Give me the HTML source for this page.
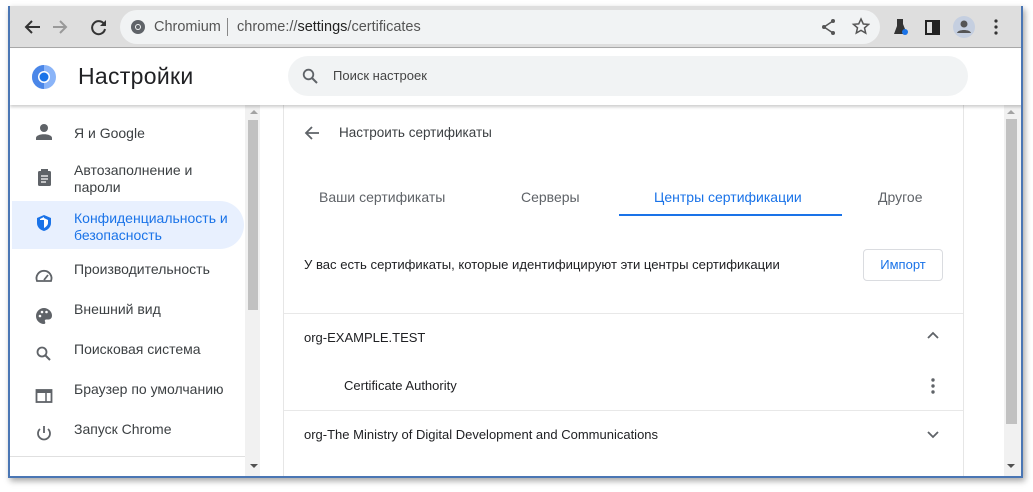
<!DOCTYPE html>
<html><head><meta charset="utf-8"><style>
*{margin:0;padding:0;box-sizing:border-box}
body{width:1033px;height:492px;background:#fff;position:relative;overflow:hidden;font-family:"Liberation Sans","DejaVu Sans",sans-serif}
.a{position:absolute}
.win{left:8px;top:6px;width:1015px;height:472px;border:2px solid #4a76b4;border-top:none;box-shadow:2px 3px 6px rgba(0,0,0,.35);background:#fff;overflow:hidden}
.t{font-size:14px;color:#3c4043;white-space:nowrap}
.nav{font-size:14px;color:#3c4043;white-space:nowrap;line-height:17px}
</style></head><body>
<div class="a win">
  <div class="a" style="left:0;top:0;width:1013px;height:42px;background:#dedede;border-bottom:1px solid #a8a8a8"></div>
  <svg class="a" style="left:12px;top:10px" width="90" height="22" viewBox="0 0 90 22">
    <path d="M18 11H5M10 5l-6 6 6 6" stroke="#333" stroke-width="2" fill="none"/>
    <path d="M44 11H31M38 5l6 6-6 6" stroke="#999" stroke-width="2" fill="none"/>
    <path d="M82 8a6.5 6.5 0 1 0 1 5" stroke="#333" stroke-width="2" fill="none"/><path d="M84 4v6h-6z" fill="#333"/>
  </svg>
  <div class="a" style="left:110px;top:4px;width:760px;height:34px;border-radius:17px;background:#f1f3f4"></div>
  <svg class="a" style="left:120px;top:13px" width="16" height="16" viewBox="0 0 16 16"><circle cx="8" cy="8" r="7" fill="#5f6368"/><circle cx="8" cy="8" r="3" fill="#f1f3f4"/><circle cx="8" cy="8" r="2" fill="#5f6368"/></svg>
  <div class="a t" style="left:144px;top:13px;color:#555;font-size:14.5px">Chromium</div>
  <div class="a" style="left:217px;top:12px;width:1px;height:18px;background:#888"></div>
  <div class="a t" style="left:227px;top:13px;color:#555;font-size:14.5px">chrome://<span style="color:#222">settings</span>/certificates</div>
  <svg class="a" style="left:810px;top:11px" width="50" height="20" viewBox="0 0 50 20"><circle cx="13" cy="4" r="2" fill="#555"/><circle cx="4" cy="10" r="2" fill="#555"/><circle cx="13" cy="16" r="2" fill="#555"/><path d="M13 4L4 10l9 6" stroke="#555" stroke-width="1.5" fill="none"/><path d="M41 2l2.3 5 5.2.4-4 3.5 1.2 5.2L41 13.4 36.3 16l1.2-5.2-4-3.5 5.2-.4z" stroke="#555" stroke-width="1.5" fill="none"/></svg>
  <svg class="a" style="left:882px;top:10px" width="110" height="22" viewBox="0 0 110 22"><path d="M5 3h6v5l4 10H2l3-8z" fill="#333"/><circle cx="13" cy="16" r="3" fill="#1a73e8"/><rect x="34" y="5" width="13" height="13" fill="none" stroke="#222" stroke-width="2"/><rect x="40" y="5" width="7" height="13" fill="#222"/><circle cx="72" cy="11" r="11" fill="#c5cfe0"/><circle cx="72" cy="8" r="3.5" fill="#555"/><path d="M65 17c1-4 13-4 14 0z" fill="#555"/><circle cx="104" cy="5" r="1.6" fill="#333"/><circle cx="104" cy="11" r="1.6" fill="#333"/><circle cx="104" cy="17" r="1.6" fill="#333"/></svg>
  <div class="a" style="left:0;top:43px;width:1013px;height:56px;background:#fff;box-shadow:0 2px 3px rgba(0,0,0,.2);z-index:2">
    <svg class="a" style="left:21px;top:15px" width="26" height="26" viewBox="0 0 26 26"><circle cx="13" cy="13" r="12" fill="#8ab4f8"/><path d="M13 1a12 12 0 0 0 0 24z" fill="#4a86e8"/><circle cx="13" cy="13" r="6" fill="#fff"/><circle cx="13" cy="13" r="4.5" fill="#1a73e8"/></svg>
    <div class="a" style="left:68px;top:14px;font-size:23px;color:#202124;letter-spacing:0.3px">Настройки</div>
    <div class="a" style="left:278px;top:7px;width:680px;height:40px;border-radius:20px;background:#f1f3f4"></div>
    <svg class="a" style="left:292px;top:19px" width="16" height="16" viewBox="0 0 16 16"><circle cx="6.5" cy="6.5" r="4.8" stroke="#5f6368" stroke-width="1.8" fill="none"/><path d="M10 10l5 5" stroke="#5f6368" stroke-width="2"/></svg>
    <div class="a" style="left:323px;top:19px;font-size:13px;color:#444">Поиск настроек</div>
  </div>
  <div class="a" style="left:0;top:99px;width:235px;height:373px;background:#fff"></div>
  <div class="a" style="left:2px;top:195px;width:232px;height:48px;background:#e8f0fe;border-radius:0 24px 24px 0"></div>
  <svg class="a" style="left:24px;top:117px" width="22" height="320" viewBox="0 0 22 320">
    <circle cx="10" cy="5" r="4" fill="#5f6368"/><path d="M2 15c0-5 16-5 16 0v2H2z" fill="#5f6368"/>
    <rect x="4" y="48" width="13" height="15" rx="1.5" fill="#5f6368"/><rect x="7" y="46" width="7" height="3" fill="#5f6368"/><path d="M7 53h7M7 56h7M7 59h5" stroke="#fff" stroke-width="1.2"/>
    <path d="M10 92l7 3v5c0 4-3 7-7 8-4-1-7-4-7-8v-5z" fill="#1a73e8"/><path d="M10 95v10c2-1 4-3 4-5v-3z" fill="#fff"/><path d="M6 97h4v-3l-4 2z" fill="#fff"/>
    <path d="M3 158a7.5 7.5 0 1 1 14 0z" fill="none" stroke="#5f6368" stroke-width="1.8"/><path d="M10 157l4-5" stroke="#5f6368" stroke-width="1.8"/>
    <path d="M10 185a8 8 0 0 0 0 16c1.5 0 1.5-1.5 1-2.5s0-2 1.5-2H15a4 4 0 0 0 3-4c0-4-4-7.5-8-7.5z" fill="#5f6368"/><circle cx="6" cy="193" r="1.3" fill="#fff"/><circle cx="8" cy="189" r="1.3" fill="#fff"/><circle cx="12.5" cy="189" r="1.3" fill="#fff"/>
    <circle cx="8" cy="229" r="4.5" stroke="#5f6368" stroke-width="1.8" fill="none"/><path d="M11 232l5 5" stroke="#5f6368" stroke-width="2"/>
    <rect x="2.5" y="267" width="15" height="12" stroke="#5f6368" stroke-width="1.8" fill="none"/><rect x="2.5" y="267" width="15" height="3" fill="#5f6368"/><path d="M12 270v9" stroke="#5f6368" stroke-width="1.5"/>
    <path d="M6 306a6 6 0 1 0 8 0" stroke="#5f6368" stroke-width="1.8" fill="none"/><path d="M10 303v7" stroke="#5f6368" stroke-width="1.8"/>
  </svg>
  <div class="a nav" style="left:64px;top:119px">Я и Google</div>
  <div class="a nav" style="left:64px;top:156px">Автозаполнение и<br>пароли</div>
  <div class="a nav" style="left:64px;top:204px;color:#1a73e8">Конфиденциальность и<br>безопасность</div>
  <div class="a nav" style="left:64px;top:255px">Производительность</div>
  <div class="a nav" style="left:64px;top:295px">Внешний вид</div>
  <div class="a nav" style="left:64px;top:335px">Поисковая система</div>
  <div class="a nav" style="left:64px;top:375px">Браузер по умолчанию</div>
  <div class="a nav" style="left:64px;top:415px">Запуск Chrome</div>
  <div class="a" style="left:0;top:450px;width:235px;height:1px;background:#e0e0e0"></div>
  <div class="a" style="left:235px;top:99px;width:15px;height:373px;background:#f1f1f1"></div>
  <div class="a" style="left:238px;top:114px;width:10px;height:190px;background:#c1c1c1"></div>
  <div class="a" style="left:240px;top:104px;width:0;height:0;border:4px solid transparent;border-bottom-color:#a3a3a3;border-top:none"></div>
  <div class="a" style="left:240px;top:458px;width:0;height:0;border:4px solid transparent;border-top-color:#505050;border-bottom:none"></div>
  <div class="a" style="left:250px;top:99px;width:23px;height:373px;background:#fff"></div>
  <div class="a" style="left:273px;top:99px;width:681px;height:373px;background:#fff;border-left:1px solid #e6e6e6;border-right:1px solid #e6e6e6"></div>
  <svg class="a" style="left:294px;top:119px" width="16" height="16" viewBox="0 0 16 16"><path d="M15 8H2M8 2L2 8l6 6" stroke="#5f6368" stroke-width="1.8" fill="none"/></svg>
  <div class="a" style="left:329px;top:119px;font-size:13.5px;color:#3c4043">Настроить сертификаты</div>
  <div class="a" style="left:309px;top:183px;font-size:14px;color:#5f6368">Ваши сертификаты</div>
  <div class="a" style="left:511px;top:183px;font-size:14px;color:#5f6368">Серверы</div>
  <div class="a" style="left:644px;top:183px;font-size:14px;color:#1a73e8">Центры сертификации</div>
  <div class="a" style="left:868px;top:183px;font-size:14px;color:#5f6368">Другое</div>
  <div class="a" style="left:609px;top:208px;width:223px;height:2px;background:#1a73e8"></div>
  <div class="a" style="left:294px;top:251px;font-size:13.1px;color:#202124">У вас есть сертификаты, которые идентифицируют эти центры сертификации</div>
  <div class="a" style="left:853px;top:243px;width:80px;height:32px;border:1px solid #dadce0;border-radius:4px;font-size:13px;color:#1a73e8;text-align:center;line-height:30px">Импорт</div>
  <div class="a" style="left:274px;top:307px;width:679px;height:1px;background:#e8e8e8"></div>
  <div class="a" style="left:294px;top:324px;font-size:13px;color:#202124">org-EXAMPLE.TEST</div>
  <svg class="a" style="left:916px;top:325px" width="14" height="10" viewBox="0 0 14 10"><path d="M2 7l5-5 5 5" stroke="#5f6368" stroke-width="1.8" fill="none"/></svg>
  <div class="a" style="left:334px;top:372px;font-size:13px;color:#202124">Certificate Authority</div>
  <svg class="a" style="left:919px;top:372px" width="8" height="16" viewBox="0 0 8 16"><circle cx="4" cy="2" r="1.7" fill="#5f6368"/><circle cx="4" cy="8" r="1.7" fill="#5f6368"/><circle cx="4" cy="14" r="1.7" fill="#5f6368"/></svg>
  <div class="a" style="left:274px;top:404px;width:679px;height:1px;background:#e8e8e8"></div>
  <div class="a" style="left:294px;top:421px;font-size:13px;color:#202124">org-The Ministry of Digital Development and Communications</div>
  <svg class="a" style="left:916px;top:423px" width="14" height="10" viewBox="0 0 14 10"><path d="M2 3l5 5 5-5" stroke="#5f6368" stroke-width="1.8" fill="none"/></svg>
  <div class="a" style="left:994px;top:99px;width:19px;height:373px;background:#f1f1f1"></div>
  <div class="a" style="left:996px;top:113px;width:11px;height:305px;background:#c1c1c1"></div>
  <div class="a" style="left:997px;top:104px;width:0;height:0;border:4px solid transparent;border-bottom-color:#a3a3a3;border-top:none"></div>
  <div class="a" style="left:997px;top:458px;width:0;height:0;border:4px solid transparent;border-top-color:#505050;border-bottom:none"></div>
</div>
</body></html>
